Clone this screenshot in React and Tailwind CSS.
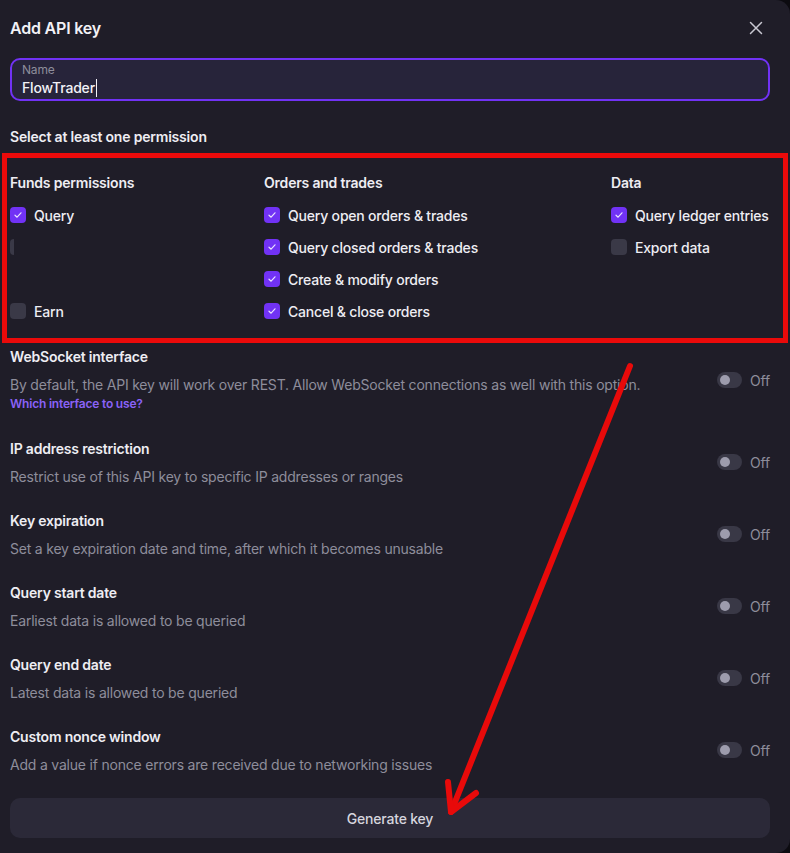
import React from "react";

const Check = ({ state }) => {
  if (state === "on")
    return (
      <span className="w-4 h-4 rounded-[4px] bg-[#7132f5] flex items-center justify-center shrink-0">
        <svg width="10" height="10" viewBox="0 0 10 10" fill="none">
          <path d="M2 5.2 L4.1 7.2 L8 2.8" stroke="#e8e0ff" strokeWidth="1.2" strokeLinecap="round" strokeLinejoin="round" />
        </svg>
      </span>
    );
  if (state === "clip")
    return <span className="w-[4px] h-4 rounded-l-[4px] bg-[#3a3947] shrink-0" />;
  return <span className="w-4 h-4 rounded-[4px] bg-[#3a3947] shrink-0" />;
};

const Row = ({ state, label }) => (
  <div className="h-8 flex items-center gap-2">
    {state && <Check state={state} />}
    {label && <span className="text-[14px] font-medium text-[#eeedf3] whitespace-nowrap">{label}</span>}
  </div>
);

const Column = ({ title, rows }) => (
  <div className="flex flex-col">
    <div className="h-5 flex items-center text-[14px] font-semibold text-[#eeedf3] mb-[7px] whitespace-nowrap">{title}</div>
    <div className="flex flex-col">
      {rows.map((r, i) => (
        <Row key={i} state={r[0]} label={r[1]} />
      ))}
    </div>
  </div>
);

const Toggle = () => (
  <div className="flex items-center gap-2 shrink-0">
    <div className="w-[25px] h-4 rounded-full bg-[#393846] flex items-center pl-[3px]">
      <div className="w-[10px] h-[10px] rounded-full bg-[#9d9cad]" />
    </div>
    <span className="text-[14px] text-[#8e8d9b]">Off</span>
  </div>
);

const Setting = ({ title, desc, link }) => (
  <div className="flex items-center justify-between">
    <div className="flex flex-col">
      <div className="h-5 flex items-center text-[14px] font-semibold text-[#eeedf3]">{title}</div>
      <div className="h-5 mt-2 flex items-center text-[14px] text-[#8e8d9b] whitespace-nowrap">{desc}</div>
      {link && (
        <div className="h-5 flex items-center text-[12px] font-semibold text-[#8a62f7]">{link}</div>
      )}
    </div>
    <Toggle />
  </div>
);

export default function App() {
  return (
    <div
      className="w-[790px] h-[853px] bg-[#0c0b10] relative overflow-hidden tracking-[-0.2px]"
      style={{ fontFamily: "Inter, 'Noto Sans', sans-serif" }}
    >
      <div className="w-[790px] h-[853px] bg-[#1f1d28] rounded-r-[14px] pl-[10px] pr-[20px] flex flex-col">
        <div className="flex items-center justify-between h-7 mt-[14px]">
          <h1 className="text-[16px] font-semibold text-[#f2f1f6]">Add API key</h1>
          <svg width="14" height="14" viewBox="0 0 14 14" className="mr-[7px]">
            <path d="M1.5 1.5 L12.5 12.5 M12.5 1.5 L1.5 12.5" stroke="#c9c8d2" strokeWidth="1.5" strokeLinecap="round" />
          </svg>
        </div>
        <div className="mt-[16px] h-[43px] rounded-[10px] border-2 border-[#7132f5] bg-[#27243a] px-[10px] flex flex-col justify-center">
          <div className="text-[12px] leading-4 text-[#8e8d9b]">Name</div>
          <div className="text-[14px] leading-5 font-medium text-[#f2f1f6] flex items-center">
            FlowTrader<span className="w-px h-[18px] bg-[#f2f1f6] ml-px" />
          </div>
        </div>
        <div className="mt-[25px] h-5 flex items-center text-[14px] font-semibold text-[#eeedf3]">
          Select at least one permission
        </div>
        <div className="mt-[26px] grid grid-cols-[254px_347px_1fr]">
          <Column
            title="Funds permissions"
            rows={[["on", "Query"], ["clip", ""], [null, ""], ["off", "Earn"]]}
          />
          <Column
            title="Orders and trades"
            rows={[
              ["on", "Query open orders & trades"],
              ["on", "Query closed orders & trades"],
              ["on", "Create & modify orders"],
              ["on", "Cancel & close orders"],
            ]}
          />
          <Column
            title="Data"
            rows={[["on", "Query ledger entries"], ["off", "Export data"]]}
          />
        </div>
        <div className="mt-[19px] flex flex-col gap-6">
          <Setting
            title="WebSocket interface"
            desc="By default, the API key will work over REST. Allow WebSocket connections as well with this option."
            link="Which interface to use?"
          />
          <Setting title="IP address restriction" desc="Restrict use of this API key to specific IP addresses or ranges" />
          <Setting title="Key expiration" desc="Set a key expiration date and time, after which it becomes unusable" />
          <Setting title="Query start date" desc="Earliest data is allowed to be queried" />
          <Setting title="Query end date" desc="Latest data is allowed to be queried" />
          <Setting title="Custom nonce window" desc="Add a value if nonce errors are received due to networking issues" />
        </div>
        <button className="mt-6 h-10 w-full rounded-[10px] bg-[#2b2938] text-[14px] font-medium text-[#d6d5de]">
          Generate key
        </button>
      </div>
      <div className="absolute left-[2px] top-[153px] w-[786px] h-[190px] border-[5px] border-[#ea0a0a] pointer-events-none" />
      <svg className="absolute left-0 top-0 pointer-events-none" width="790" height="853" viewBox="0 0 790 853">
        <g stroke="#e80a0a" strokeWidth="6" strokeLinecap="round" strokeLinejoin="round" fill="none">
          <path d="M630 366 L451 812" />
          <path d="M448 782 L451 812 L476 793" />
        </g>
      </svg>
    </div>
  );
}
